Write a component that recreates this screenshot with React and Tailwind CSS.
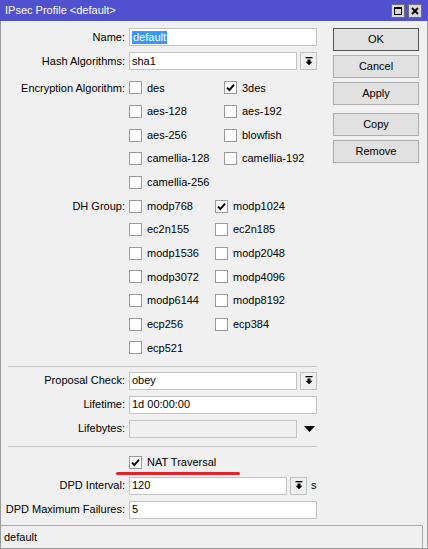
import React from 'react';

const encRows = [
  ['des', false, '3des', true],
  ['aes-128', false, 'aes-192', false],
  ['aes-256', false, 'blowfish', false],
  ['camellia-128', false, 'camellia-192', false],
  ['camellia-256', false],
];

const dhRows = [
  ['modp768', false, 'modp1024', true],
  ['ec2n155', false, 'ec2n185', false],
  ['modp1536', false, 'modp2048', false],
  ['modp3072', false, 'modp4096', false],
  ['modp6144', false, 'modp8192', false],
  ['ecp256', false, 'ecp384', false],
  ['ecp521', false],
];

function Check({ checked, label }) {
  return (
    <div className="flex items-center">
      <span className="w-[13px] h-[13px] bg-white border border-[#9a9a9a] flex items-center justify-center">
        {checked && (
          <svg width="9" height="9" viewBox="0 0 9 9">
            <path d="M1 4.6 L3.4 7 L8 1.6" stroke="#000" strokeWidth="1.9" fill="none" />
          </svg>
        )}
      </span>
      <span className="ml-[5px]">{label}</span>
    </div>
  );
}

function Row({ label, children, className = 'h-[24px]' }) {
  return (
    <div className={`relative flex items-center ${className}`}>
      <div className="w-[124px] text-right whitespace-nowrap">{label ? label + ':' : ''}</div>
      <div className="ml-[4px] flex items-center">{children}</div>
    </div>
  );
}

function Field({ value, width = 'w-[188px]', disabled }) {
  return (
    <div
      className={`${width} h-[18px] border border-[#c3c3c3] pl-[2px] flex items-center ${
        disabled ? 'bg-[#f0f0f0]' : 'bg-white'
      }`}
    >
      {value}
    </div>
  );
}

function DropBtn() {
  return (
    <span className="ml-[3px] w-[17px] h-[18px] border border-[#c3c3c3] bg-[#f0f0f0] flex items-center justify-center">
      <svg width="8" height="9" viewBox="0 0 8 9">
        <rect x="0.5" y="0" width="7" height="1.3" fill="#000" />
        <path d="M2.5 2.5h3v2.3h2L4 8.3 0.5 4.8h2z" fill="#000" />
      </svg>
    </span>
  );
}

function CheckGrid({ label, rows, col }) {
  return (
    <div>
      {rows.map((r, i) => (
        <Row key={r[0]} label={i === 0 ? label : ''} className="h-[23.65px]">
          <div className={col}>
            <Check label={r[0]} checked={r[1]} />
          </div>
          {r[2] && <Check label={r[2]} checked={r[3]} />}
        </Row>
      ))}
    </div>
  );
}

function Btn({ children, primary }) {
  return (
    <button
      className={`h-[23px] w-[86px] bg-[#e1e1e1] border ${
        primary ? 'border-[#555555]' : 'border-[#adadad]'
      } text-[11px] text-black`}
    >
      {children}
    </button>
  );
}

function Separator({ className }) {
  return <div className={`ml-[7px] w-[309px] border-t border-[#c8c8c8] ${className}`} />;
}

export default function App() {
  return (
    <div className="w-[428px] h-[549px] bg-[#f0f0f0] flex flex-col border-x border-b border-[#9a9a9a] font-['Liberation_Sans',Arial,sans-serif] text-[11px] text-black">
      <div className="-mx-[1px] h-[21px] bg-[#5151cf] flex items-center pl-[5px] text-white">
        <span>IPsec Profile &lt;default&gt;</span>
        <div className="ml-auto mr-[6px] flex gap-[3px]">
          <span className="w-[14px] h-[14px] bg-[#d8d8d8] border border-[#6f6f6f] flex items-center justify-center">
            <span className="w-[8px] h-[8px] border border-black border-t-2" />
          </span>
          <span className="w-[14px] h-[14px] bg-[#d8d8d8] border border-[#6f6f6f] flex items-center justify-center">
            <svg width="8" height="8" viewBox="0 0 8 8">
              <path d="M1 1 L7 7 M7 1 L1 7" stroke="#000" strokeWidth="1.8" />
            </svg>
          </span>
        </div>
      </div>

      <div className="flex flex-1">
        <div className="w-[332px] pt-[4px]">
          <Row label="Name">
            <Field
              value={<span className="bg-[#3399ff] text-white px-[1px] leading-[13px]">default</span>}
            />
          </Row>
          <Row label="Hash Algorithms">
            <Field value="sha1" width="w-[168px]" />
            <DropBtn />
          </Row>
          <div className="mt-[3px]">
            <CheckGrid label="Encryption Algorithm" rows={encRows} col="w-[95px]" />
            <CheckGrid label="DH Group" rows={dhRows} col="w-[86px]" />
          </div>

          <Separator className="mt-[6px]" />
          <div className="mt-[2px]">
            <Row label="Proposal Check">
              <Field value="obey" width="w-[168px]" />
              <DropBtn />
            </Row>
            <Row label="Lifetime">
              <Field value="1d 00:00:00" />
            </Row>
            <Row label="Lifebytes">
              <Field value="" width="w-[168px]" disabled />
              <span className="ml-[7px] w-[11px] flex justify-center">
                <svg width="11" height="6" viewBox="0 0 11 6">
                  <path d="M0 0 H11 L5.5 6 Z" fill="#000" />
                </svg>
              </span>
            </Row>
          </div>

          <Separator className="mt-[5px]" />
          <div className="mt-[4px]">
            <Row label="" className="h-[23px]">
              <Check label="NAT Traversal" checked />
              <span className="absolute left-[115px] top-[21px] w-[124px] h-[3px] rounded-full bg-[#e5202a]" />
            </Row>
            <Row label="DPD Interval">
              <Field value="120" width="w-[158px]" />
              <DropBtn />
              <span className="ml-[4px]">s</span>
            </Row>
            <Row label="DPD Maximum Failures">
              <Field value="5" />
            </Row>
          </div>
        </div>

        <div className="pt-[7px] flex flex-col">
          <div className="flex flex-col gap-[4px]">
            <Btn primary>OK</Btn>
            <Btn>Cancel</Btn>
            <Btn>Apply</Btn>
          </div>
          <div className="mt-[8px] flex flex-col gap-[4px]">
            <Btn>Copy</Btn>
            <Btn>Remove</Btn>
          </div>
        </div>
      </div>

      <div className="h-[23px] mr-[4px] border-t border-r border-[#a8a8a8] flex items-center pl-[3px]">
        default
      </div>
    </div>
  );
}
